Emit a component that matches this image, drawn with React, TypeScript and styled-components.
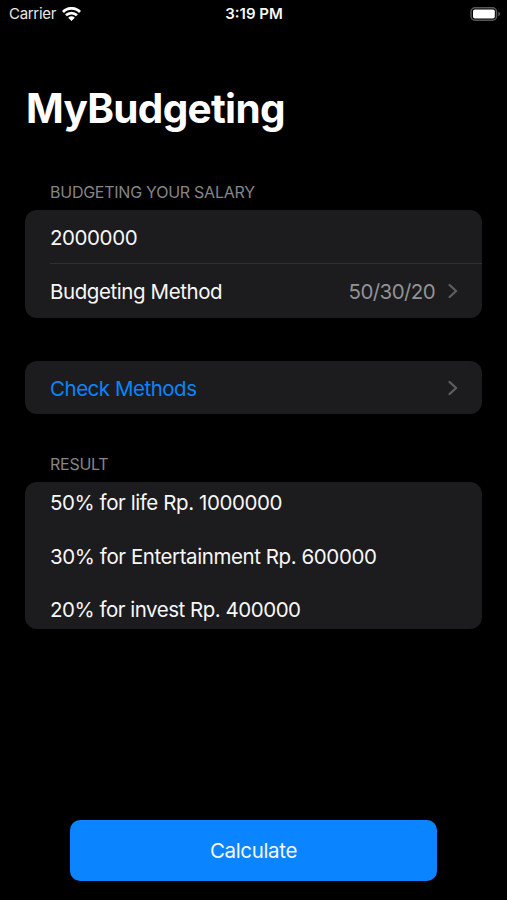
import React from "react";
import styled, { createGlobalStyle } from "styled-components";

const Global = createGlobalStyle`
  *{box-sizing:border-box}
  html,body{margin:0;background:#000}
  body{font-family:Inter,"Liberation Sans",sans-serif;color:#fff;overflow:hidden}
`;
const Screen = styled.main`
  width:507px;height:900px;background:#000;display:flex;flex-direction:column;
`;
const StatusBar = styled.header`
  height:27px;display:grid;grid-template-columns:1fr auto 1fr;align-items:center;padding:0 6px 0 9px;
`;
const Label = styled.span<{ $size?: number; $track?: number; $weight?: number; $color?: string }>`
  display:block;white-space:nowrap;line-height:26px;
  font-size:${p => p.$size ?? 20.5}px;letter-spacing:${p => p.$track ?? -0.42}px;
  font-weight:${p => p.$weight ?? 400};color:${p => p.$color ?? "#f7f7f7"};
`;
const Carrier = styled.div`display:flex;align-items:center;gap:6px;`;
const Clock = styled.div`margin-right:2px;`;
const Battery = styled.svg`justify-self:end;`;
const Title = styled.h1`
  margin:57px 0 0 26px;font-size:40.5px;line-height:50px;font-weight:700;letter-spacing:-.7px;
`;
const SectionTitle = styled.h2<{ $top: number }>`
  margin:${p => p.$top}px 0 0 50px;height:20px;font-size:16px;line-height:20px;font-weight:400;
  letter-spacing:-.25px;color:#858589;
`;
const Card = styled.section<{ $top: number; $height: number }>`
  margin:${p => p.$top}px 25px 0;height:${p => p.$height}px;background:#1c1c1e;border-radius:12px;overflow:hidden;
`;
const Row = styled.div<{ $divided?: boolean }>`
  margin-left:25px;padding:2px 24px 0 0;height:54px;display:flex;align-items:center;
  border-bottom:${p => (p.$divided ? "1px solid #2f2f32" : "0")};
`;
const Trailing = styled.div`margin-left:auto;display:flex;align-items:center;gap:13px;`;
const ChevronIcon = styled.svg`margin-bottom:2px;`;
const ResultCard = styled(Card)`display:flex;flex-direction:column;justify-content:center;`;
const ResultRow = styled.div`
  flex:none;height:53.5px;padding:2px 0 0 25px;display:flex;align-items:center;
`;
const Button = styled.button`
  margin:191px 70px 0;height:61px;border:0;border-radius:10px;background:#0a84ff;color:#fff;font:inherit;
  display:flex;align-items:center;justify-content:center;
`;
const Chevron = () => (
  <ChevronIcon width="10" height="16" viewBox="0 0 10 16" fill="none" stroke="#5d5d61" strokeWidth="2.3" strokeLinecap="round" strokeLinejoin="round">
    <path d="M1.6 2 8.1 8 1.6 14" />
  </ChevronIcon>
);

export default function App() {
  return (
    <Screen>
      <Global />
      <StatusBar>
        <Carrier>
          <Label $size={15} $track={-0.3} $color="#e8e8e8">Carrier</Label>
          <svg width="19" height="14" viewBox="0 0 19 14" fill="none" stroke="#fff" strokeWidth="2.8">
            <path d="M1 4.9a12 12 0 0 1 17 0M4 8.3a7.8 7.8 0 0 1 11 0" />
            <path d="M6.2 10.7a4.6 4.6 0 0 1 6.6 0L9.5 13.9z" fill="#fff" stroke="none" />
          </svg>
        </Carrier>
        <Clock><Label $size={15} $track={0} $weight={600}>3:19 PM</Label></Clock>
        <Battery width="31" height="14" viewBox="0 0 31 14">
          <rect x="1" y=".8" width="25.5" height="12.4" rx="4" fill="none" stroke="#58585a" strokeWidth="1.5" />
          <rect x="3" y="2.5" width="21.8" height="9" rx="1.8" fill="#fff" />
          <path d="M28.3 4.8c2.4.9 2.4 3.5 0 4.4z" fill="#58585a" />
        </Battery>
      </StatusBar>
      <Title>MyBudgeting</Title>
      <SectionTitle $top={48}>BUDGETING YOUR SALARY</SectionTitle>
      <Card $top={8} $height={108}>
        <Row $divided><Label>2000000</Label></Row>
        <Row>
          <Label>Budgeting Method</Label>
          <Trailing><Label $track={-0.6} $color="#929297">50/30/20</Label><Chevron /></Trailing>
        </Row>
      </Card>
      <Card $top={43} $height={53}>
        <Row><Label $track={-0.48} $color="#0a84ff">Check Methods</Label><Trailing><Chevron /></Trailing></Row>
      </Card>
      <SectionTitle $top={40}>RESULT</SectionTitle>
      <ResultCard $top={8} $height={147}>
        <ResultRow><Label>50% for life Rp. 1000000</Label></ResultRow>
        <ResultRow><Label>30% for Entertainment Rp. 600000</Label></ResultRow>
        <ResultRow><Label $track={-0.48}>20% for invest Rp. 400000</Label></ResultRow>
      </ResultCard>
      <Button><Label $track={-0.35}>Calculate</Label></Button>
    </Screen>
  );
}
